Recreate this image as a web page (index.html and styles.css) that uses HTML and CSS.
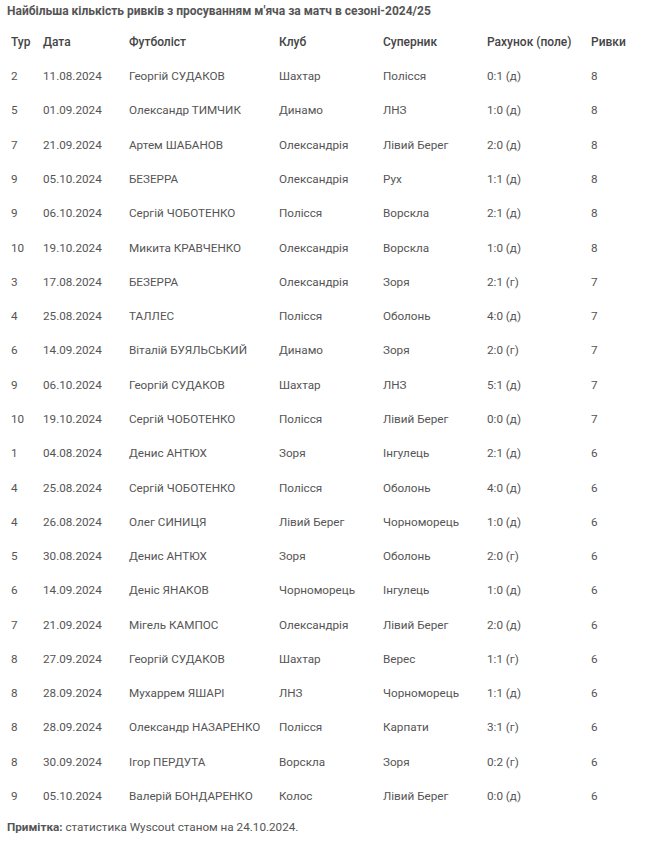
FILE: index.html
```html
<!DOCTYPE html>
<html lang="uk">
<head>
<meta charset="utf-8">
<link rel="stylesheet" href="styles.css">
</head>
<body>
<div class="wrap">
  <h3 class="title">Найбільша кількість ривків з просуванням м'яча за матч в сезоні-2024/25</h3>
  <table class="stats">
    <colgroup>
      <col class="c-tour"><col class="c-date"><col class="c-player"><col class="c-club"><col class="c-opp"><col class="c-score"><col class="c-runs">
    </colgroup>
    <thead>
      <tr><th>Тур</th><th>Дата</th><th>Футболіст</th><th>Клуб</th><th>Суперник</th><th>Рахунок (поле)</th><th>Ривки</th></tr>
    </thead>
    <tbody>
      <tr><td>2</td><td>11.08.2024</td><td>Георгій СУДАКОВ</td><td>Шахтар</td><td>Полісся</td><td>0:1 (д)</td><td>8</td></tr>
      <tr><td>5</td><td>01.09.2024</td><td>Олександр ТИМЧИК</td><td>Динамо</td><td>ЛНЗ</td><td>1:0 (д)</td><td>8</td></tr>
      <tr><td>7</td><td>21.09.2024</td><td>Артем ШАБАНОВ</td><td>Олександрія</td><td>Лівий Берег</td><td>2:0 (д)</td><td>8</td></tr>
      <tr><td>9</td><td>05.10.2024</td><td>БЕЗЕРРА</td><td>Олександрія</td><td>Рух</td><td>1:1 (д)</td><td>8</td></tr>
      <tr><td>9</td><td>06.10.2024</td><td>Сергій ЧОБОТЕНКО</td><td>Полісся</td><td>Ворскла</td><td>2:1 (д)</td><td>8</td></tr>
      <tr><td>10</td><td>19.10.2024</td><td>Микита КРАВЧЕНКО</td><td>Олександрія</td><td>Ворскла</td><td>1:0 (д)</td><td>8</td></tr>
      <tr><td>3</td><td>17.08.2024</td><td>БЕЗЕРРА</td><td>Олександрія</td><td>Зоря</td><td>2:1 (г)</td><td>7</td></tr>
      <tr><td>4</td><td>25.08.2024</td><td>ТАЛЛЕС</td><td>Полісся</td><td>Оболонь</td><td>4:0 (д)</td><td>7</td></tr>
      <tr><td>6</td><td>14.09.2024</td><td>Віталій БУЯЛЬСЬКИЙ</td><td>Динамо</td><td>Зоря</td><td>2:0 (г)</td><td>7</td></tr>
      <tr><td>9</td><td>06.10.2024</td><td>Георгій СУДАКОВ</td><td>Шахтар</td><td>ЛНЗ</td><td>5:1 (д)</td><td>7</td></tr>
      <tr><td>10</td><td>19.10.2024</td><td>Сергій ЧОБОТЕНКО</td><td>Полісся</td><td>Лівий Берег</td><td>0:0 (д)</td><td>7</td></tr>
      <tr><td>1</td><td>04.08.2024</td><td>Денис АНТЮХ</td><td>Зоря</td><td>Інгулець</td><td>2:1 (д)</td><td>6</td></tr>
      <tr><td>4</td><td>25.08.2024</td><td>Сергій ЧОБОТЕНКО</td><td>Полісся</td><td>Оболонь</td><td>4:0 (д)</td><td>6</td></tr>
      <tr><td>4</td><td>26.08.2024</td><td>Олег СИНИЦЯ</td><td>Лівий Берег</td><td>Чорноморець</td><td>1:0 (д)</td><td>6</td></tr>
      <tr><td>5</td><td>30.08.2024</td><td>Денис АНТЮХ</td><td>Зоря</td><td>Оболонь</td><td>2:0 (г)</td><td>6</td></tr>
      <tr><td>6</td><td>14.09.2024</td><td>Деніс ЯНАКОВ</td><td>Чорноморець</td><td>Інгулець</td><td>1:0 (д)</td><td>6</td></tr>
      <tr><td>7</td><td>21.09.2024</td><td>Мігель КАМПОС</td><td>Олександрія</td><td>Лівий Берег</td><td>2:0 (д)</td><td>6</td></tr>
      <tr><td>8</td><td>27.09.2024</td><td>Георгій СУДАКОВ</td><td>Шахтар</td><td>Верес</td><td>1:1 (г)</td><td>6</td></tr>
      <tr><td>8</td><td>28.09.2024</td><td>Мухаррем ЯШАРІ</td><td>ЛНЗ</td><td>Чорноморець</td><td>1:1 (д)</td><td>6</td></tr>
      <tr><td>8</td><td>28.09.2024</td><td>Олександр НАЗАРЕНКО</td><td>Полісся</td><td>Карпати</td><td>3:1 (г)</td><td>6</td></tr>
      <tr><td>8</td><td>30.09.2024</td><td>Ігор ПЕРДУТА</td><td>Ворскла</td><td>Зоря</td><td>0:2 (г)</td><td>6</td></tr>
      <tr><td>9</td><td>05.10.2024</td><td>Валерій БОНДАРЕНКО</td><td>Колос</td><td>Лівий Берег</td><td>0:0 (д)</td><td>6</td></tr>
    </tbody>
  </table>
  <p class="note"><strong>Примітка:</strong> статистика Wyscout станом на 24.10.2024.</p>
</div>
</body>
</html>
```

FILE: styles.css
```css
html, body {
  margin: 0;
  padding: 0;
  background: #ffffff;
}

.wrap {
  padding: 3px 7px 0 7px;
  font-family: Roboto, "Noto Sans", sans-serif;
  color: #555555;
  font-size: 11.7px;
}

.title {
  margin: 0;
  font-size: 12px;
  font-weight: 700;
  color: #555555;
  line-height: 17px;
}

.stats {
  border-collapse: collapse;
  width: 631px;
  table-layout: fixed;
  margin-top: 5px;
}

.c-tour { width: 32px; }
.c-date { width: 86px; }
.c-player { width: 150px; }
.c-club { width: 104px; }
.c-opp { width: 104px; }
.c-score { width: 104px; }

.stats th,
.stats td {
  text-align: left;
  padding: 0 0 0 4px;
  height: 34.29px;
  vertical-align: middle;
  white-space: nowrap;
}

.stats th {
  font-size: 12px;
  font-weight: 500;
  color: #444444;
  height: 34px;
}

.note {
  margin: 5px 0 0 0;
  line-height: 18px;
}

.note strong {
  font-weight: 700;
}
```
